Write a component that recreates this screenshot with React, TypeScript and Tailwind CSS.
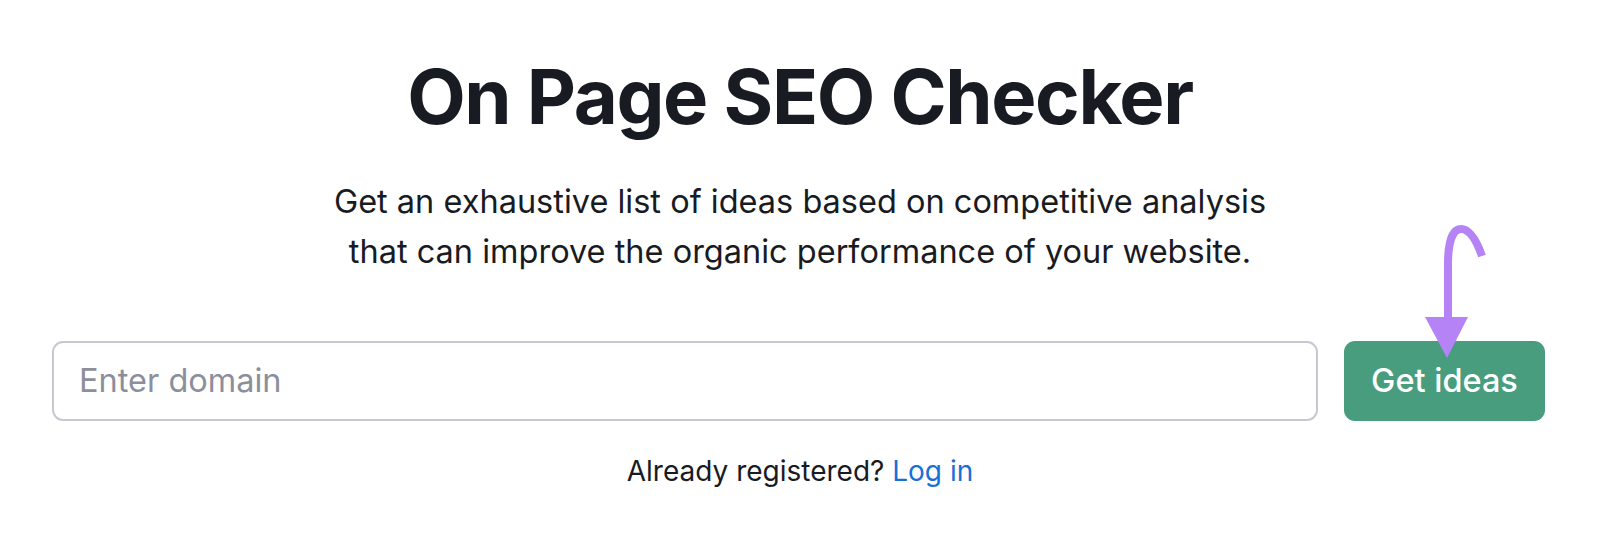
import React from "react";

export default function App() {
  return (
    <div
      className="relative w-[1600px] h-[541px] bg-white overflow-hidden"
      style={{ fontFamily: "Inter, 'Noto Sans', sans-serif" }}
    >
      <div className="flex flex-col items-center pt-[50px]">
        <h1 className="text-[76px] leading-[92px] font-bold text-[#191b23] tracking-[-1.4px]">
          On Page SEO Checker
        </h1>
        <p className="mt-[35px] text-[32.5px] leading-[50px] text-[#191b23] text-center">
          Get an exhaustive list of ideas based on competitive analysis
          <br />
          that can improve the organic performance of your website.
        </p>
      </div>
      <div className="mt-[64px] flex items-stretch gap-[26px] pl-[52px] pr-[55px] h-[80px]">
        <div className="flex-1 flex items-center rounded-[11px] border-2 border-[#c7c9d0] bg-white px-[25px]">
          <span className="text-[32.5px] text-[#8b8f9c]">Enter domain</span>
        </div>
        <button className="w-[201px] rounded-[11px] bg-[#489d7f] text-white text-[32.5px] font-medium">
          Get ideas
        </button>
      </div>
      <div className="mt-[33px] text-center text-[28px] leading-[34px] text-[#191b23]">
        Already registered? <span className="text-[#1a6fd4]">Log in</span>
      </div>
      <svg
        className="absolute left-0 top-0 pointer-events-none"
        width="1600"
        height="541"
        viewBox="0 0 1600 541"
      >
        <path
          d="M1482 256 C1476 239 1469 229 1461 229 C1452 229 1448 244 1448 264 L1448 322"
          fill="none"
          stroke="#b583f6"
          strokeWidth="8"
        />
        <path d="M1425 317 L1468 317 L1447 358 Z" fill="#b583f6" />
      </svg>
    </div>
  );
}
